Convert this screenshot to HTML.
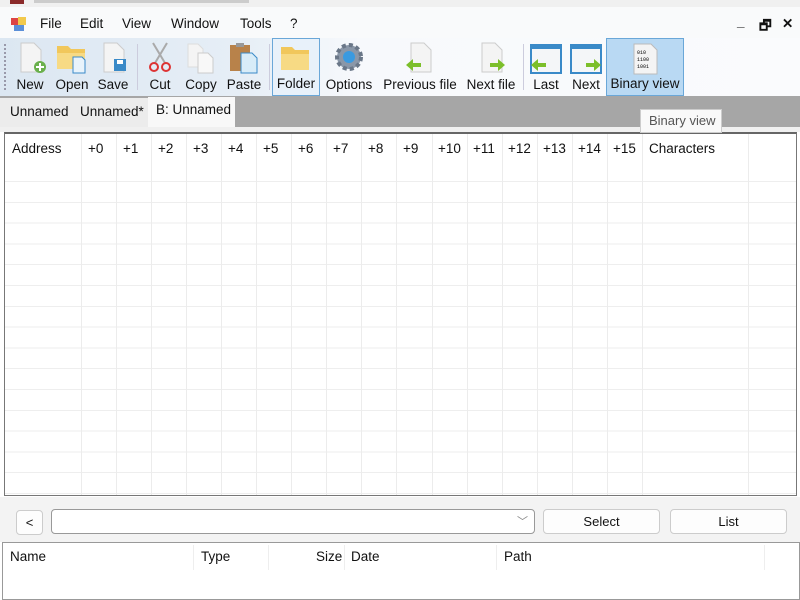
<!DOCTYPE html>
<html><head><meta charset="utf-8"><style>
*{margin:0;padding:0;box-sizing:border-box}
body{width:800px;height:600px;overflow:hidden;background:#fff;font-family:"Liberation Sans",sans-serif;font-size:13px;color:#111;position:relative}
.a{position:absolute}
.menu span{position:absolute;top:16px;font-size:13.5px}
.tb{position:absolute;top:38px;height:58px;left:0;width:800px;background:linear-gradient(90deg,#dce7f2 0%,#e6eef6 30%,#f7f9fc 45%,#fafbfd 100%)}
.btn{position:absolute;top:0;height:58px;text-align:center;font-size:13.5px}
.btn .l{position:absolute;bottom:4px;left:0;right:0;white-space:nowrap}
.btn svg{position:absolute;top:3px;left:50%;margin-left:-17px}
.grid{position:absolute;left:4px;top:132px;width:793px;height:364px;border:1px solid #777;border-top:2px solid #666;background:#fff}
.rows{position:absolute;left:0;right:0;top:47px;bottom:0;background:repeating-linear-gradient(180deg,#eee 0 1px,transparent 1px 20.8px)}
.vl{position:absolute;top:0;bottom:0;width:1px;background:#ececec}
.h{position:absolute;top:7px;font-size:13.5px}
.bt{position:absolute;border:1px solid #ccc;border-radius:4px;background:#fdfdfd;text-align:center;font-size:13px}
</style></head><body>
<div class="a" style="left:0;top:0;width:800px;height:7px;background:#f0f0f0"></div>
<div class="a" style="left:10px;top:0;width:14px;height:4px;background:#8b2a2a"></div>
<div class="a" style="left:34px;top:0;width:215px;height:3px;background:#ccc"></div>
<div class="a" style="left:0;top:7px;width:800px;height:31px;background:#f9fafb"></div>
<div class="menu">
<div class="a" style="left:11px;top:18px;width:7px;height:7px;background:#d44"></div>
<div class="a" style="left:18px;top:17px;width:8px;height:8px;background:#f2c94c"></div>
<div class="a" style="left:14px;top:25px;width:10px;height:6px;background:#5b8fd8"></div>
<span style="left:40px">File</span><span style="left:80px">Edit</span><span style="left:122px">View</span><span style="left:171px">Window</span><span style="left:240px">Tools</span><span style="left:290px">?</span>
<span style="left:737px;top:14px;font-weight:bold">_</span><span style="left:759px;font-weight:bold">🗗</span><span style="left:782px;font-weight:bold">✕</span>
</div>
<div class="tb">
<div class="a" style="left:4px;top:6px;width:2px;height:46px;border-left:2px dotted #99a"></div>
<div class="btn" style="left:12px;width:36px"><svg width="34" height="34"><path d="M8 2h13l7 7v22H8z" fill="#f4f4f4" stroke="#ccc"/><circle cx="27" cy="26" r="6" fill="#6ab04c"/><path d="M27 22v8M23 26h8" stroke="#fff" stroke-width="2"/></svg><div class="l">New</div></div>
<div class="btn" style="left:54px;width:36px"><svg width="34" height="34"><path d="M2 5h11l3 3h14v20H2z" fill="#f1c75b"/><path d="M2 12h28v16H2z" fill="#f7da84"/><path d="M18 16h9l3 3v13H18z" fill="#e8f3fb" stroke="#3a8ac8"/></svg><div class="l">Open</div></div>
<div class="btn" style="left:96px;width:34px"><svg width="34" height="34"><path d="M8 2h13l7 7v22H8z" fill="#f4f4f4" stroke="#ccc"/><rect x="18" y="18" width="12" height="12" fill="#3a8ac8"/><rect x="21" y="19" width="6" height="4" fill="#fff"/></svg><div class="l">Save</div></div>
<div class="a" style="left:137px;top:6px;width:1px;height:46px;background:#ccd"></div>
<div class="btn" style="left:144px;width:32px"><svg width="34" height="34"><path d="M10 2l12 20M24 2L12 22" stroke="#aaa" stroke-width="2"/><circle cx="11" cy="26" r="4" fill="none" stroke="#d33" stroke-width="2"/><circle cx="23" cy="26" r="4" fill="none" stroke="#d33" stroke-width="2"/></svg><div class="l">Cut</div></div>
<div class="btn" style="left:183px;width:36px"><svg width="34" height="34"><path d="M4 3h10l5 5v18H4z" fill="#f4f4f4" stroke="#ddd"/><path d="M14 12h10l5 5v15H14z" fill="#f8f8f8" stroke="#ccc"/></svg><div class="l">Copy</div></div>
<div class="btn" style="left:225px;width:38px"><svg width="34" height="34"><rect x="3" y="4" width="20" height="26" fill="#b8824a"/><rect x="9" y="2" width="8" height="4" fill="#999"/><path d="M14 12h11l5 5v15H14z" fill="#d8ecf8" stroke="#3a8ac8"/></svg><div class="l">Paste</div></div>
<div class="a" style="left:269px;top:6px;width:1px;height:46px;background:#ccd"></div>
<div class="btn" style="left:272px;width:48px;border:1px solid #6aa7d8;background:#e8f1fa"><svg width="34" height="34"><path d="M2 5h11l3 3h14v20H2z" fill="#f1c75b"/><path d="M2 12h28v16H2z" fill="#f7da84"/></svg><div class="l">Folder</div></div>
<div class="btn" style="left:324px;width:50px"><svg width="34" height="34"><circle cx="17" cy="16" r="12" fill="#8a97a8" stroke="#6a7788" stroke-width="4" stroke-dasharray="4 3"/><circle cx="17" cy="16" r="6" fill="#3a9ae0"/></svg><div class="l">Options</div></div>
<div class="btn" style="left:381px;width:78px"><svg width="34" height="34"><path d="M8 2h13l7 7v22H8z" fill="#f4f4f4" stroke="#ccc"/><path d="M3 24l7-6v4h8v4h-8v4z" fill="#7cbf2a"/></svg><div class="l">Previous file</div></div>
<div class="btn" style="left:463px;width:56px"><svg width="34" height="34"><path d="M8 2h13l7 7v22H8z" fill="#f4f4f4" stroke="#ccc"/><path d="M31 24l-7-6v4h-8v4h8v4z" fill="#7cbf2a"/></svg><div class="l">Next file</div></div>
<div class="a" style="left:523px;top:6px;width:1px;height:46px;background:#ccd"></div>
<div class="btn" style="left:528px;width:36px"><svg width="34" height="34"><rect x="2" y="4" width="30" height="28" fill="#f4f6f8" stroke="#3a8ac8" stroke-width="2"/><rect x="2" y="4" width="30" height="4" fill="#3a8ac8"/><path d="M2 24l7-6v4h8v4H9v4z" fill="#7cbf2a"/></svg><div class="l">Last</div></div>
<div class="btn" style="left:568px;width:36px"><svg width="34" height="34"><rect x="2" y="4" width="30" height="28" fill="#f4f6f8" stroke="#3a8ac8" stroke-width="2"/><rect x="2" y="4" width="30" height="4" fill="#3a8ac8"/><path d="M32 24l-7-6v4h-8v4h8v4z" fill="#7cbf2a"/></svg><div class="l">Next</div></div>
<div class="btn" style="left:606px;width:78px;border:1px solid #6aa7d8;background:#b9d9f3"><svg width="34" height="34"><path d="M6 2h17l6 6v24H6z" fill="#f4f4f4" stroke="#bbb"/><text x="9" y="12" font-size="5" font-family="Liberation Mono">010</text><text x="9" y="19" font-size="5" font-family="Liberation Mono">1100</text><text x="9" y="26" font-size="5" font-family="Liberation Mono">1001</text></svg><div class="l">Binary view</div></div>
</div>
<div class="a" style="left:0;top:96px;width:800px;height:31px;background:#a6a6a6"></div>
<div class="a" style="left:0;top:98px;width:235px;height:29px;background:#ececec"></div>
<div class="a" style="left:148px;top:97px;width:87px;height:30px;background:#f8f8f8"></div>
<div class="a" style="left:10px;top:104px;font-size:13.5px">Unnamed</div>
<div class="a" style="left:80px;top:104px;font-size:13.5px">Unnamed*</div>
<div class="a" style="left:156px;top:102px;font-size:13.5px">B: Unnamed</div>
<div class="a" style="left:0;top:127px;width:800px;height:5px;background:#f0f0f0"></div>
<div class="grid">
<div class="rows"></div>
<div class="vl" style="left:76px"></div><div class="vl" style="left:111px"></div><div class="vl" style="left:146px"></div><div class="vl" style="left:181px"></div><div class="vl" style="left:216px"></div><div class="vl" style="left:251px"></div><div class="vl" style="left:286px"></div><div class="vl" style="left:321px"></div><div class="vl" style="left:356px"></div><div class="vl" style="left:391px"></div><div class="vl" style="left:427px"></div><div class="vl" style="left:462px"></div><div class="vl" style="left:497px"></div><div class="vl" style="left:532px"></div><div class="vl" style="left:567px"></div><div class="vl" style="left:602px"></div><div class="vl" style="left:637px"></div><div class="vl" style="left:743px"></div>
<div class="h" style="left:7px">Address</div>
<div class="h" style="left:83px">+0</div><div class="h" style="left:118px">+1</div><div class="h" style="left:153px">+2</div><div class="h" style="left:188px">+3</div><div class="h" style="left:223px">+4</div><div class="h" style="left:258px">+5</div><div class="h" style="left:293px">+6</div><div class="h" style="left:328px">+7</div><div class="h" style="left:363px">+8</div><div class="h" style="left:398px">+9</div><div class="h" style="left:433px">+10</div><div class="h" style="left:468px">+11</div><div class="h" style="left:503px">+12</div><div class="h" style="left:538px">+13</div><div class="h" style="left:573px">+14</div><div class="h" style="left:608px">+15</div><div class="h" style="left:644px">Characters</div>
</div>
<div class="a" style="left:640px;top:109px;width:82px;height:24px;background:#f9f9f9;border:1px solid #ccc;font-size:13px;padding:3px 0 0 8px;color:#555">Binary view</div>
<div class="a" style="left:0;top:497px;width:800px;height:45px;background:#f3f3f3"></div>
<div class="bt" style="left:16px;top:510px;width:27px;height:25px;line-height:23px">&lt;</div>
<div class="bt" style="left:51px;top:509px;width:484px;height:25px;background:#fff;border-color:#999"><span style="position:absolute;right:6px;top:3px;color:#888;font-size:11px">﹀</span></div>
<div class="bt" style="left:543px;top:509px;width:117px;height:25px;line-height:23px">Select</div>
<div class="bt" style="left:670px;top:509px;width:117px;height:25px;line-height:23px">List</div>
<div class="a" style="left:2px;top:542px;width:798px;height:58px;border:1px solid #999;background:#fff"></div>
<div class="a" style="left:10px;top:549px;font-size:13.5px">Name</div>
<div class="a" style="left:193px;top:545px;width:1px;height:25px;background:#eee"></div>
<div class="a" style="left:201px;top:549px;font-size:13.5px">Type</div>
<div class="a" style="left:268px;top:545px;width:1px;height:25px;background:#eee"></div>
<div class="a" style="left:316px;top:549px;font-size:13.5px">Size</div>
<div class="a" style="left:344px;top:545px;width:1px;height:25px;background:#eee"></div>
<div class="a" style="left:351px;top:549px;font-size:13.5px">Date</div>
<div class="a" style="left:496px;top:545px;width:1px;height:25px;background:#eee"></div>
<div class="a" style="left:504px;top:549px;font-size:13.5px">Path</div>
<div class="a" style="left:764px;top:545px;width:1px;height:25px;background:#eee"></div>
</body></html>
